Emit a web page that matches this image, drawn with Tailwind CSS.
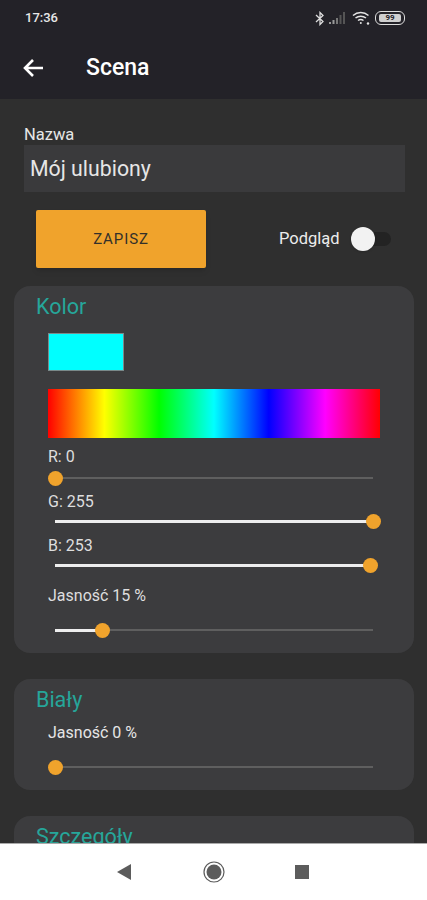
<!DOCTYPE html>
<html>
<head>
<meta charset="utf-8">
<script src="https://cdn.jsdelivr.net/npm/@tailwindcss/browser@4"></script>
</head>
<body class="m-0">
<div class="w-[427px] h-[900px] flex flex-col overflow-hidden bg-[#2f2f2f] font-['Roboto',sans-serif]">
  <header class="h-[99px] shrink-0 bg-[#232228] text-white flex flex-col">
    <div class="h-[36px] flex items-center justify-between pl-[25px] pr-[22px]">
      <span class="text-[13px] font-medium text-[#e8e8e8]">17:36</span>
      <div class="flex items-center gap-[4px]">
        <svg width="10" height="15" viewBox="0 0 10 15" fill="none" stroke="#dddddd" stroke-width="1.3"><path d="M1 4l7 6.5L5 13.5V1.5L8 4.5 1 11"/></svg>
        <svg width="17" height="12" viewBox="0 0 17 12"><rect x="0" y="10" width="2" height="2" fill="#999"/><rect x="3.5" y="8" width="2" height="4" fill="#999"/><rect x="7" y="6" width="2" height="6" fill="#777"/><rect x="10.5" y="3" width="2" height="9" fill="#555"/><rect x="14" y="0" width="2" height="12" fill="#555"/></svg>
        <svg width="18" height="14" viewBox="0 0 18 14" fill="none" stroke="#e4e4e4" stroke-width="1.5" class="ml-[2px]"><path d="M1 4.5c4.500-4 11-4 15.500 0M3.500 7c3-2.500 7.500-2.500 10.500 0M6 9.500c1.500-1 4-1 5.500 0"/><circle cx="8.800" cy="12" r="1" fill="#e4e4e4" stroke="none"/><circle cx="16" cy="12.500" r="1.200" fill="#e4e4e4" stroke="none"/></svg>
        <div class="ml-[1px] w-[30px] h-[14px] rounded-[6px] border-[1.5px] border-[#dddddd] flex items-center justify-center">
          <span class="w-[22px] h-[8px] bg-[#cfcfcf] rounded-[2px] text-[8px] leading-[8px] font-bold text-[#232228] text-center">99</span>
        </div>
      </div>
    </div>
    <div class="flex items-center h-[46px] pl-[22px] mt-[9px]">
      <svg width="22" height="20" viewBox="0 0 22 20" fill="none" stroke="#ffffff" stroke-width="2.600"><path d="M21 10H3M11 2l-8 8 8 8"/></svg>
      <span class="ml-[42px] text-[23px] font-medium text-white">Scena</span>
    </div>
  </header>

  <main class="flex-1 min-h-0 overflow-hidden">
    <div class="px-[24px] pt-[27px]">
      <div class="text-[16.500px] leading-[18px] text-[#e6e6e6]">Nazwa</div>
      <div class="w-[381px] h-[47px] mt-[1px] bg-[#3a3a3c] pl-[6px] flex items-center text-[21.300px] text-[#e6e6e6]">Mój ulubiony</div>
    </div>
    <div class="flex items-center mt-[18px] pl-[36px]">
      <div class="w-[170px] h-[58px] bg-[#f0a32c] rounded-[2px] shadow-md flex items-center justify-center text-[15px] tracking-[0.9px] text-[#33302a]">ZAPISZ</div>
      <span class="ml-[73px] text-[16.500px] text-[#ececec]">Podgląd</span>
      <div class="relative ml-[11px] w-[40px] h-[14px] rounded-full bg-[#232323]">
        <div class="absolute left-0 top-[-5px] w-[24px] h-[24px] rounded-full bg-[#f2f2f2] shadow"></div>
      </div>
    </div>

    <section class="mx-[14px] mt-[18px] w-[400px] h-[367px] rounded-[16px] bg-[#3c3c3e] pt-[8px]">
      <h2 class="ml-[22px] text-[21.500px] leading-[26px] text-[#26a69a]">Kolor</h2>
      <div class="ml-[34px] mt-[13px] w-[76px] h-[38px] bg-[#00ffff] border border-[#7a8a8a]"></div>
      <div class="ml-[34px] mt-[18px] w-[332px] h-[49px] bg-[linear-gradient(to_right,#ff0000_0%,#ffff00_17%,#00ff00_33.500%,#00ffff_50%,#0000ff_66.500%,#ff00ff_83.500%,#ff0000_100%)]"></div>

      <div class="ml-[34px] mt-[10px] text-[16px] leading-[18px] text-[#dedede]">R: 0</div>
      <div class="relative ml-[41px] mt-[11px] w-[318px] h-[2px] bg-[#5f5f5f]">
        <div class="absolute left-[-7.500px] top-[-6.500px] w-[15px] h-[15px] rounded-full bg-[#f0a32c]"></div>
      </div>

      <div class="ml-[34px] mt-[14px] text-[16px] leading-[18px] text-[#dedede]">G: 255</div>
      <div class="relative ml-[41px] mt-[9px] w-[318px] h-[3px] bg-[#eeeeee]">
        <div class="absolute right-[-7.500px] top-[-6px] w-[15px] h-[15px] rounded-full bg-[#f0a32c]"></div>
      </div>

      <div class="ml-[34px] mt-[14px] text-[16px] leading-[18px] text-[#dedede]">B: 253</div>
      <div class="relative ml-[41px] mt-[9px] w-[318px] h-[3px] bg-[#eeeeee]">
        <div class="absolute right-[-5px] top-[-6px] w-[15px] h-[15px] rounded-full bg-[#f0a32c]"></div>
      </div>

      <div class="ml-[34px] mt-[20px] text-[16px] leading-[18px] text-[#dedede]">Jasność 15 %</div>
      <div class="relative ml-[41px] mt-[24px] w-[318px] h-[2px] bg-[#5f5f5f]">
        <div class="h-[3px] w-[47px] bg-[#eeeeee]"></div>
        <div class="absolute left-[40px] top-[-6.500px] w-[15px] h-[15px] rounded-full bg-[#f0a32c]"></div>
      </div>
    </section>

    <section class="mx-[14px] mt-[26px] w-[400px] h-[111px] rounded-[16px] bg-[#3c3c3e] pt-[8px]">
      <h2 class="ml-[22px] text-[21.500px] leading-[26px] text-[#26a69a]">Biały</h2>
      <div class="ml-[34px] mt-[11px] text-[16px] leading-[18px] text-[#e6e6e6]">Jasność 0 %</div>
      <div class="relative ml-[41px] mt-[24px] w-[318px] h-[2px] bg-[#5f5f5f]">
        <div class="absolute left-[-7.500px] top-[-6.500px] w-[15px] h-[15px] rounded-full bg-[#f0a32c]"></div>
      </div>
    </section>

    <section class="mx-[14px] mt-[26px] w-[400px] h-[111px] rounded-[16px] bg-[#3c3c3e] pt-[8px]">
      <h2 class="ml-[22px] text-[21.500px] leading-[26px] text-[#26a69a]">Szczegóły</h2>
    </section>
  </main>

  <nav class="h-[57px] shrink-0 bg-white border-t border-[#aaaaaa] relative flex items-center justify-center">
    <svg width="14" height="16" viewBox="0 0 14 16" class="absolute left-[117px] top-[20px]"><path d="M14 0v16L0 8z" fill="#5c5c5c"/></svg>
    <svg width="22" height="22" viewBox="0 0 22 22" class="absolute left-[203px] top-[17px]"><circle cx="11" cy="11" r="10" fill="none" stroke="#5c5c5c" stroke-width="1.200"/><circle cx="11" cy="11" r="7.500" fill="#5c5c5c"/></svg>
    <div class="absolute left-[295px] top-[21px] w-[14px] h-[14px] bg-[#5c5c5c]"></div>
  </nav>
</div>
</body>
</html>
